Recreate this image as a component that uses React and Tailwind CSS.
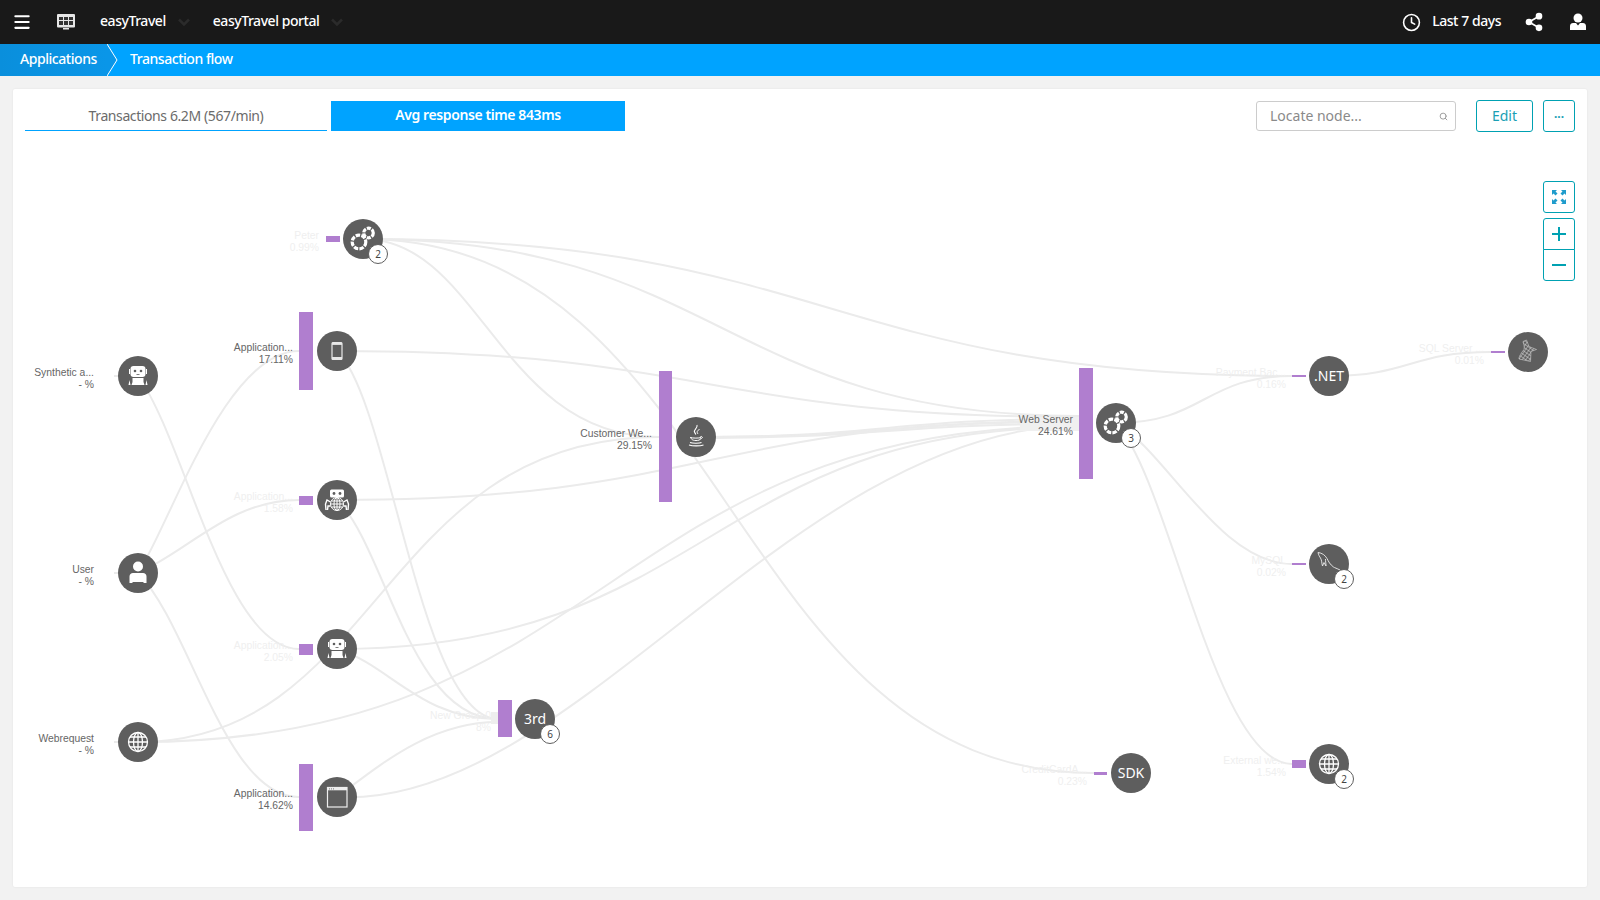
import React from "react";
import { Clock, Menu, Search, Share2 } from "lucide-react";

const CANVAS_X = 13;
const CANVAS_Y = 140;

// [x1, y1, x2, y2] gives an even S curve, four more numbers set the control points
const curve = ([x1, y1, x2, y2, c1x, c1y, c2x, c2y]) => {
  const mx = (x1 + x2) / 2;
  if (c1x === undefined) return `M${x1} ${y1}C${mx} ${y1} ${mx} ${y2} ${x2} ${y2}`;
  return `M${x1} ${y1}C${c1x} ${c1y} ${c2x} ${c2y} ${x2} ${y2}`;
};

const edges = [
  [114, 376, 138, 376],
  [114, 573, 138, 573],
  [114, 742, 138, 742],
  [138, 376, 299, 649, 185, 440, 225, 649],
  [138, 573, 299, 351, 170, 525, 225, 351],
  [138, 573, 299, 500, 190, 550, 230, 500],
  [138, 573, 299, 797, 190, 625, 225, 797],
  [138, 742, 659, 437, 380, 742, 380, 437],
  [138, 742, 1079, 426],
  [363, 239, 659, 437, 480, 239, 500, 437],
  [363, 239, 1079, 416],
  [363, 239, 1292, 376],
  [363, 239, 1094, 773],
  [337, 351, 1079, 417],
  [337, 351, 498, 719, 390, 400, 420, 719],
  [337, 500, 498, 719, 385, 545, 410, 719],
  [337, 500, 1079, 421],
  [337, 649, 498, 719, 390, 665, 420, 719],
  [337, 649, 1079, 427],
  [337, 797, 498, 722, 380, 765, 430, 722],
  [337, 797, 1079, 425, 570, 810, 790, 430],
  [696, 437, 1079, 419],
  [696, 437, 1079, 422],
  [696, 438, 1079, 424],
  [1116, 423, 1292, 376],
  [1116, 423, 1292, 564, 1165, 450, 1220, 564],
  [1116, 423, 1292, 764, 1170, 480, 1215, 764],
  [1329, 376, 1491, 352],
];

const RobotIcon = () => (
  <svg viewBox="0 0 40 40" className="h-10 w-10">
    <rect x="12.5" y="10" width="15" height="11" rx="3" fill="#fff" />
    <rect x="11" y="13" width="1" height="5" fill="#fff" />
    <rect x="28" y="13" width="1" height="5" fill="#fff" />
    <circle cx="17" cy="15" r="1.3" fill="#5e5e5e" />
    <circle cx="23" cy="15" r="1.3" fill="#5e5e5e" />
    <rect x="18.5" y="18" width="3" height="0.8" fill="#5e5e5e" />
    <path d="M14.5 22h11v4l1 3h-13l1-3z" fill="#fff" />
    <path d="M11.5 24l-1 5h2zM28.5 24l1 5h-2z" fill="#fff" />
  </svg>
);

const MobileIcon = () => (
  <svg viewBox="0 0 40 40" className="h-10 w-10">
    <rect x="15" y="11.5" width="10" height="17" rx="1" fill="none" stroke="#e8e8e8" strokeWidth="1.2" />
    <rect x="15" y="11.5" width="10" height="2.4" fill="#e8e8e8" />
    <rect x="15" y="26" width="10" height="2.6" fill="#e8e8e8" />
  </svg>
);

const CrawlerIcon = () => (
  <svg viewBox="0 0 40 40" className="h-10 w-10">
    <rect x="13" y="9.5" width="14" height="8" rx="1.5" fill="#fff" />
    <circle cx="17" cy="13.5" r="1.4" fill="#5e5e5e" />
    <circle cx="23" cy="13.5" r="1.4" fill="#5e5e5e" />
    <g fill="none" stroke="#fff" strokeWidth="1">
      <circle cx="20" cy="24" r="6.5" />
      <ellipse cx="20" cy="24" rx="3" ry="6.5" />
      <path d="M13.5 24h13M14.5 21h11M14.5 27h11M20 17.5v13" />
      <path d="M13.5 22l-3.5-2-1.5 4 .5 6M13.5 26l-2.5 0-.5 4M26.5 22l3.5-2 1.5 4-.5 6M26.5 26l2.5 0 .5 4" strokeWidth="1.4" />
    </g>
  </svg>
);

const UserIcon = () => (
  <svg viewBox="0 0 40 40" className="h-10 w-10">
    <circle cx="20" cy="13.5" r="5" fill="#fff" />
    <path d="M11.5 30v-6.5c0-2 1.5-3.5 3.5-3.5h10c2 0 3.5 1.5 3.5 3.5V30h-3v-1h-11v1z" fill="#fff" />
  </svg>
);

const GlobeIcon = () => (
  <svg viewBox="0 0 40 40" className="h-10 w-10" fill="none" stroke="#fff" strokeWidth="1.3">
    <circle cx="20" cy="20" r="9.5" />
    <ellipse cx="20" cy="20" rx="4.5" ry="9.5" />
    <path d="M20 10.5v19M10.5 20h19M12 15h16M12 25h16" />
  </svg>
);

const BrowserIcon = () => (
  <svg viewBox="0 0 40 40" className="h-10 w-10">
    <rect x="10.5" y="10.5" width="19.5" height="19.5" fill="none" stroke="#eee" strokeWidth="1.2" />
    <rect x="10.5" y="10.5" width="19.5" height="2.8" fill="#eee" />
    <path d="M12 11.9h1M14 11.9h1M16 11.9h1" stroke="#5e5e5e" strokeWidth="0.8" />
  </svg>
);

const ProcessIcon = () => (
  <svg viewBox="0 0 40 40" className="h-10 w-10" fill="none" stroke="#fff" strokeWidth="3.2">
    <circle cx="16" cy="23" r="6.8" strokeDasharray="4.5 1.2" />
    <circle cx="25.5" cy="14" r="4.8" strokeDasharray="4 1.1" />
  </svg>
);

const JavaIcon = () => (
  <svg viewBox="0 0 40 40" className="h-10 w-10" fill="none" stroke="#fff" strokeWidth="1">
    <path d="M21 8c1 3-3.5 4.5-2.5 7 .4 1 1 1.5 1.3 2.5" strokeWidth="1.1" />
    <path d="M23.5 12.5c-2.5 1-3 2.5-1.5 4.5" />
    <path d="M14 20.5c3 .8 9 .8 11 0M15.5 20.5c-.8.8 0 3 4.5 3 2.5 0 4-.6 4.5-1.5" />
    <path d="M24.5 19.5c2.5-.5 2.5 2-.5 2.5" />
    <path d="M14 25.5c2.5 1 9.5 1 11.5 0M13 28c3.5 1.2 11 1.2 14.5 0" strokeWidth="1.1" />
  </svg>
);

const MySqlIcon = () => (
  <svg viewBox="0 0 40 40" className="h-10 w-10" fill="none" stroke="#ececec" strokeWidth="0.9">
    <path d="M9 8.5c4 .5 7 2.5 9 6 1.5 3 3 6 6.5 8.5 1 .7 3.5 1.5 6.5 3" />
    <path d="M9 8.5c.5 2.5 1.5 4 2.5 5.500 1.5 2.500 1 5 2 8l1.500-3.500 2 3.500c0-3-.7-5-.5-7" />
  </svg>
);

const SqlServerIcon = () => (
  <svg viewBox="0 0 40 40" className="h-10 w-10">
    <defs>
      <pattern id="sqlmesh" width="3" height="3" patternUnits="userSpaceOnUse" patternTransform="rotate(35)">
        <rect width="3" height="3" fill="#5e5e5e" />
        <path d="M0 0h3M0 0v3" stroke="#e6e6e6" strokeWidth="0.9" />
      </pattern>
    </defs>
    <path d="M15 9.5l3.5-1.5 2.5 6.5 7.5 3-5.5 2-.5 10-4.5-1-7-1.500c-.5-2 2.500-6.500 5-9.500.5-2.500 0-5-1-7.500z" fill="url(#sqlmesh)" stroke="#ddd" strokeWidth="0.5" />
  </svg>
);

const nodes = [
  { x: 138, y: 376, label: "Synthetic a...", pct: "- %", labelRight: 94, icon: <RobotIcon /> },
  { x: 138, y: 573, label: "User", pct: "- %", labelRight: 94, icon: <UserIcon /> },
  { x: 138, y: 742, label: "Webrequest", pct: "- %", labelRight: 94, icon: <GlobeIcon /> },
  { x: 363, y: 239, label: "Peter", pct: "0.99%", labelRight: 319, faded: true, badge: 2, icon: <ProcessIcon />, bar: [326, 236, 14, 6] },
  { x: 337, y: 351, label: "Application...", pct: "17.11%", labelRight: 293, icon: <MobileIcon />, bar: [299, 312, 14, 78] },
  { x: 337, y: 500, label: "Application...", pct: "1.58%", labelRight: 293, faded: true, icon: <CrawlerIcon />, bar: [299, 496, 14, 9] },
  { x: 337, y: 649, label: "Application...", pct: "2.05%", labelRight: 293, faded: true, icon: <RobotIcon />, bar: [299, 644, 14, 11] },
  { x: 337, y: 797, label: "Application...", pct: "14.62%", labelRight: 293, icon: <BrowserIcon />, bar: [299, 764, 14, 67] },
  { x: 696, y: 437, label: "Customer We...", pct: "29.15%", labelRight: 652, icon: <JavaIcon />, bar: [659, 371, 13, 131] },
  { x: 535, y: 719, label: "New Group 0", pct: "8%", labelRight: 491, faded: true, badge: 6, text: "3rd", bar: [498, 700, 14, 37] },
  { x: 1116, y: 423, label: "Web Server", pct: "24.61%", labelRight: 1073, badge: 3, icon: <ProcessIcon />, bar: [1079, 368, 14, 111] },
  { x: 1131, y: 773, label: "CreditCardA...", pct: "0.23%", labelRight: 1087, faded: true, text: "SDK", bar: [1094, 772, 13, 3] },
  { x: 1329, y: 376, label: "Payment Bac...", pct: "0.16%", labelRight: 1286, faded: true, text: ".NET", bar: [1292, 375, 14, 2] },
  { x: 1528, y: 352, label: "SQL Server ...", pct: "0.01%", labelRight: 1484, faded: true, icon: <SqlServerIcon />, bar: [1491, 351, 14, 2] },
  { x: 1329, y: 564, label: "MySQL", pct: "0.02%", labelRight: 1286, faded: true, badge: 2, icon: <MySqlIcon />, bar: [1292, 563, 14, 2] },
  { x: 1329, y: 764, label: "External we...", pct: "1.54%", labelRight: 1286, faded: true, badge: 2, icon: <GlobeIcon />, bar: [1292, 760, 14, 8] },
];

function FlowNode({ node }) {
  const { x, y, label, pct, labelRight, faded, badge, icon, text, bar } = node;
  return (
    <>
      {bar && (
        <div
          className="absolute bg-[#b07ecf]"
          style={{ left: bar[0] - CANVAS_X, top: bar[1] - CANVAS_Y, width: bar[2], height: bar[3] }}
        />
      )}
      <div
        className={`absolute flex w-[120px] flex-col items-end font-['Liberation_Sans',sans-serif] text-[10.35px] leading-[12.3px] ${
          faded ? "text-[#efefef]" : "text-[#666666]"
        }`}
        style={{ left: labelRight - 120 - CANVAS_X, top: y - 9 - CANVAS_Y }}
      >
        <span>{label}</span>
        <span>{pct}</span>
      </div>
      <div
        className="absolute flex h-10 w-10 items-center justify-center rounded-full bg-[#5e5e5e] font-['Noto_Sans',sans-serif] text-[14px] text-white"
        style={{ left: x - 20 - CANVAS_X, top: y - 20 - CANVAS_Y }}
      >
        {icon || <span className="pb-[1px]">{text}</span>}
        {badge && (
          <span className="absolute left-[25px] top-[25px] flex h-[20px] w-[20px] items-center justify-center rounded-full border border-[#5e5e5e] bg-white text-[10px] text-[#444444]">
            {badge}
          </span>
        )}
      </div>
    </>
  );
}

const MonitorIcon = () => (
  <svg viewBox="0 0 18 18" className="h-[18px] w-[18px]">
    <rect x="0" y="1" width="18" height="13.5" rx="1" fill="#e6e6e6" />
    <path d="M2 4h4v3H2zM7 4h4v3H7zM12 4h4v3h-4zM2 8h4v4H2zM7 8h4v4H7zM12 8h4v4h-4z" fill="#333333" />
    <rect x="6" y="15" width="6" height="1.5" fill="#e6e6e6" />
  </svg>
);

const Chevron = () => (
  <svg viewBox="0 0 12 12" className="h-3 w-3" fill="none" stroke="#2b2b2b" strokeWidth="2.5">
    <path d="M1 3.5l5 5 5-5" />
  </svg>
);

const UserBadgeIcon = () => (
  <svg viewBox="0 0 16 18" className="h-[18px] w-[16px]" fill="#ffffff">
    <circle cx="8" cy="5" r="4.5" />
    <path d="M0 17v-4c0-2 1.5-3 3-3h3l2 2.5 2-2.5h3c1.5 0 3 1 3 3v4z" />
  </svg>
);

const ExpandIcon = () => (
  <svg viewBox="0 0 14 14" className="h-[14px] w-[14px]" fill="#1f9ccc">
    <path d="M0 0h5L3.5 1.5 5.5 3.5 3.5 5.5 1.5 3.5 0 5zM14 0v5l-1.5-1.5-2 2-2-2 2-2L9 0zM0 14V9l1.5 1.5 2-2 2 2-2 2L5 14zM14 14H9l1.5-1.5-2-2 2-2 2 2L14 9z" />
  </svg>
);

export default function App() {
  return (
    <div className="flex h-[900px] w-[1600px] flex-col bg-[#f2f2f2] font-['Noto_Sans',sans-serif]">
      <header className="flex h-[44px] items-center bg-[#191919] text-[14px] font-medium tracking-[-0.45px] text-white">
        <Menu className="ml-[12px] h-[20px] w-[20px]" strokeWidth={2.5} />
        <div className="ml-[25px]">
          <MonitorIcon />
        </div>
        <span className="ml-[25px] pb-[3px]">easyTravel</span>
        <div className="ml-[12px]">
          <Chevron />
        </div>
        <span className="ml-[23px] pb-[3px]">easyTravel portal</span>
        <div className="ml-[12px]">
          <Chevron />
        </div>
        <div className="ml-auto flex items-center pr-[14px]">
          <Clock className="h-[19px] w-[19px]" strokeWidth={2} />
          <span className="ml-[11px] pb-[3px]">Last 7 days</span>
          <Share2 className="ml-[23px] h-[20px] w-[20px]" fill="#ffffff" strokeWidth={2} />
          <div className="ml-[26px]">
            <UserBadgeIcon />
          </div>
        </div>
      </header>

      <nav className="flex h-[32px] items-center bg-[#00a3ff] text-[14px] font-medium tracking-[-0.45px] text-white">
        <div className="flex h-full w-[107px] items-center bg-gradient-to-r from-[#0a8fdc] to-[#0a96e8] pb-[3px] pl-[20px]">Applications</div>
        <svg viewBox="0 0 11 32" className="h-[32px] w-[11px]">
          <path d="M0 0L10 16L0 32Z" fill="#0a96e8" />
          <path d="M0 0L10 16L0 32" fill="none" stroke="#ffffff" strokeWidth="1" />
        </svg>
        <span className="ml-[12px] pb-[3px]">Transaction flow</span>
      </nav>

      <main className="m-[13px] flex flex-1 flex-col rounded-[2px] bg-white shadow-[0_0_2px_rgba(0,0,0,0.08)]">
        <div className="flex items-center px-[12px] pb-[8px] pt-[11px]">
          <div className="flex h-[30px] w-[302px] items-center justify-center border-b border-[#00a3ff] pb-[1px] text-[14px] tracking-[-0.4px] text-[#6b6b6b]">
            Transactions 6.2M (567/min)
          </div>
          <div className="ml-[4px] flex h-[30px] w-[294px] items-center justify-center bg-[#00a3ff] pb-[3px] text-[14px] font-semibold tracking-[-0.4px] text-white">
            Avg response time 843ms
          </div>
          <div className="relative ml-auto flex h-[30px] w-[200px] items-center rounded-[3px] border border-[#cccccc] pb-[1px] pl-[13px]">
            <input
              placeholder="Locate node..."
              className="w-[160px] bg-transparent text-[14px] text-[#666666] outline-none placeholder:text-[#8a8a8a]"
            />
            <Search className="absolute right-[7px] top-[10px] h-[9px] w-[9px] text-[#999999]" strokeWidth={2.5} />
          </div>
          <button className="ml-[20px] h-[32px] w-[57px] rounded-[3px] border border-[#00a1b2] pb-[1px] text-[14px] text-[#1a9fb5]">Edit</button>
          <button className="ml-[10px] h-[32px] w-[32px] rounded-[3px] border border-[#00a1b2] pb-[5px] text-[12px] font-bold leading-none text-[#1a9fb5]">...</button>
        </div>

        <div className="relative flex-1">
          <svg
            viewBox={`${CANVAS_X} ${CANVAS_Y} 1574 747`}
            className="absolute left-0 top-0 h-[747px] w-[1574px]"
            fill="none"
            stroke="#ebebeb"
            strokeWidth="2"
          >
            {edges.map((e, i) => (
              <path key={i} d={curve(e)} />
            ))}
            <rect x="1020" y="417" width="59" height="14" fill="#f0f0f0" stroke="none" />
            <rect x="491" y="712" width="7" height="12" fill="#eeeeee" stroke="none" />
          </svg>

          {nodes.map((node, i) => (
            <FlowNode key={i} node={node} />
          ))}

          <div className="absolute left-[1530px] top-[41px] flex flex-col">
            <button className="flex h-[32px] w-[32px] items-center justify-center rounded-[3px] border border-[#00a1b2]">
              <ExpandIcon />
            </button>
            <button className="mt-[5px] flex h-[32px] w-[32px] items-center justify-center rounded-t-[3px] border border-[#00a1b2]">
              <svg viewBox="0 0 14 14" className="h-[14px] w-[14px]" fill="#00a1b2">
                <path d="M6 0h2v6h6v2H8v6H6V8H0V6h6z" />
              </svg>
            </button>
            <button className="-mt-px flex h-[32px] w-[32px] items-center justify-center rounded-b-[3px] border border-[#00a1b2]">
              <svg viewBox="0 0 14 2" className="h-[2px] w-[14px]" fill="#00a1b2">
                <rect width="14" height="2" />
              </svg>
            </button>
          </div>
        </div>
      </main>
    </div>
  );
}
